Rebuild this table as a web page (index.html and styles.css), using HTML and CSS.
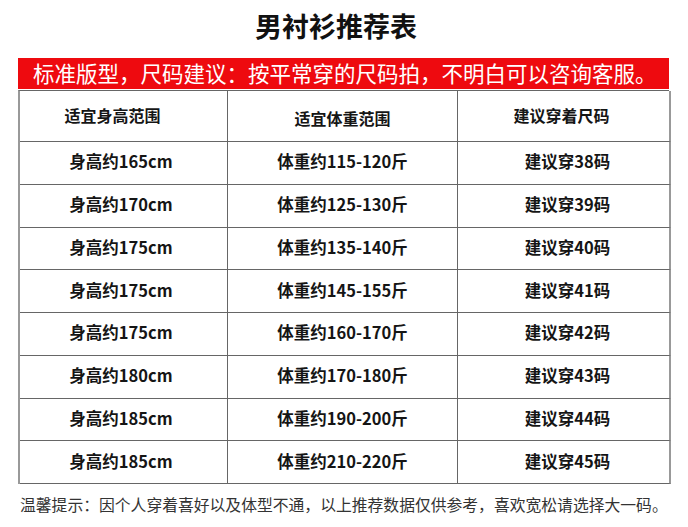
FILE: index.html
```html
<!DOCTYPE html>
<html lang="zh">
<head>
<meta charset="utf-8">
<link rel="stylesheet" href="styles.css">
</head>
<body>
<div class="page">
  <h1 class="title">男衬衫推荐表</h1>
  <div class="banner">标准版型，尺码建议：按平常穿的尺码拍，不明白可以咨询客服。</div>
  <div class="grid">
    <div class="cell head h1">适宜身高范围</div>
    <div class="cell head h2">适宜体重范围</div>
    <div class="cell head h3">建议穿着尺码</div>

    <div class="cell c1">身高约165cm</div><div class="cell">体重约115-120斤</div><div class="cell c3">建议穿38码</div>
    <div class="cell c1">身高约170cm</div><div class="cell">体重约125-130斤</div><div class="cell c3">建议穿39码</div>
    <div class="cell c1">身高约175cm</div><div class="cell">体重约135-140斤</div><div class="cell c3">建议穿40码</div>
    <div class="cell c1">身高约175cm</div><div class="cell">体重约145-155斤</div><div class="cell c3">建议穿41码</div>
    <div class="cell c1">身高约175cm</div><div class="cell">体重约160-170斤</div><div class="cell c3">建议穿42码</div>
    <div class="cell c1">身高约180cm</div><div class="cell">体重约170-180斤</div><div class="cell c3">建议穿43码</div>
    <div class="cell c1">身高约185cm</div><div class="cell">体重约190-200斤</div><div class="cell c3">建议穿44码</div>
    <div class="cell c1">身高约185cm</div><div class="cell">体重约210-220斤</div><div class="cell c3">建议穿45码</div>
  </div>
  <p class="note">温馨提示：因个人穿着喜好以及体型不通，以上推荐数据仅供参考，喜欢宽松请选择大一码。</p>
</div>
</body>
</html>
```
FILE: styles.css
```css
html, body {
  margin: 0;
  padding: 0;
  background: #ffffff;
}
.page {
  width: 688px;
  height: 527px;
  font-family: "Noto Sans CJK SC", "Noto Sans", sans-serif;
  color: #111;
}
.title {
  margin: 0;
  height: 58px;
  line-height: 52px;
  font-size: 27px;
  font-weight: 700;
  text-align: center;
  padding-right: 16px;
  color: #111;
}
.banner {
  margin: 0 19px 0 18px;
  height: 31px;
  line-height: 30px;
  padding-left: 15px;
  background: #ee0a0f;
  color: #ffffff;
  font-size: 21.5px;
  white-space: nowrap;
  overflow: hidden;
}
.grid {
  margin: 1px 0 0 18px;
  width: 651px;
  box-sizing: border-box;
  display: grid;
  grid-template-columns: 208px 230px 213px;
  grid-template-rows: 51px repeat(8, 42.75px);
  border-top: 1px solid #666;
  border-left: 2px solid #999;
}
.cell {
  box-sizing: border-box;
  border-right: 1px solid #666;
  border-bottom: 1px solid #666;
  display: flex;
  align-items: center;
  justify-content: center;
  font-size: 16.5px;
  font-weight: 700;
  color: #151515;
  padding-bottom: 3px;
}
.cell:nth-child(3n) {
  border-right: 2px solid #999;
}
.head {
  font-size: 16px;
  padding-bottom: 2px;
}
.head.h1 {
  padding-right: 22px;
}
.head.h2 {
  padding-bottom: 0;
  padding-top: 4px;
}
.head.h3 {
  padding-right: 4px;
}
.c1 {
  padding-right: 5px;
}
.c3 {
  padding-left: 8px;
}
.note {
  margin: 10px 0 0 20px;
  font-size: 15.8px;
  line-height: 22px;
  color: #333;
  white-space: nowrap;
}
```
